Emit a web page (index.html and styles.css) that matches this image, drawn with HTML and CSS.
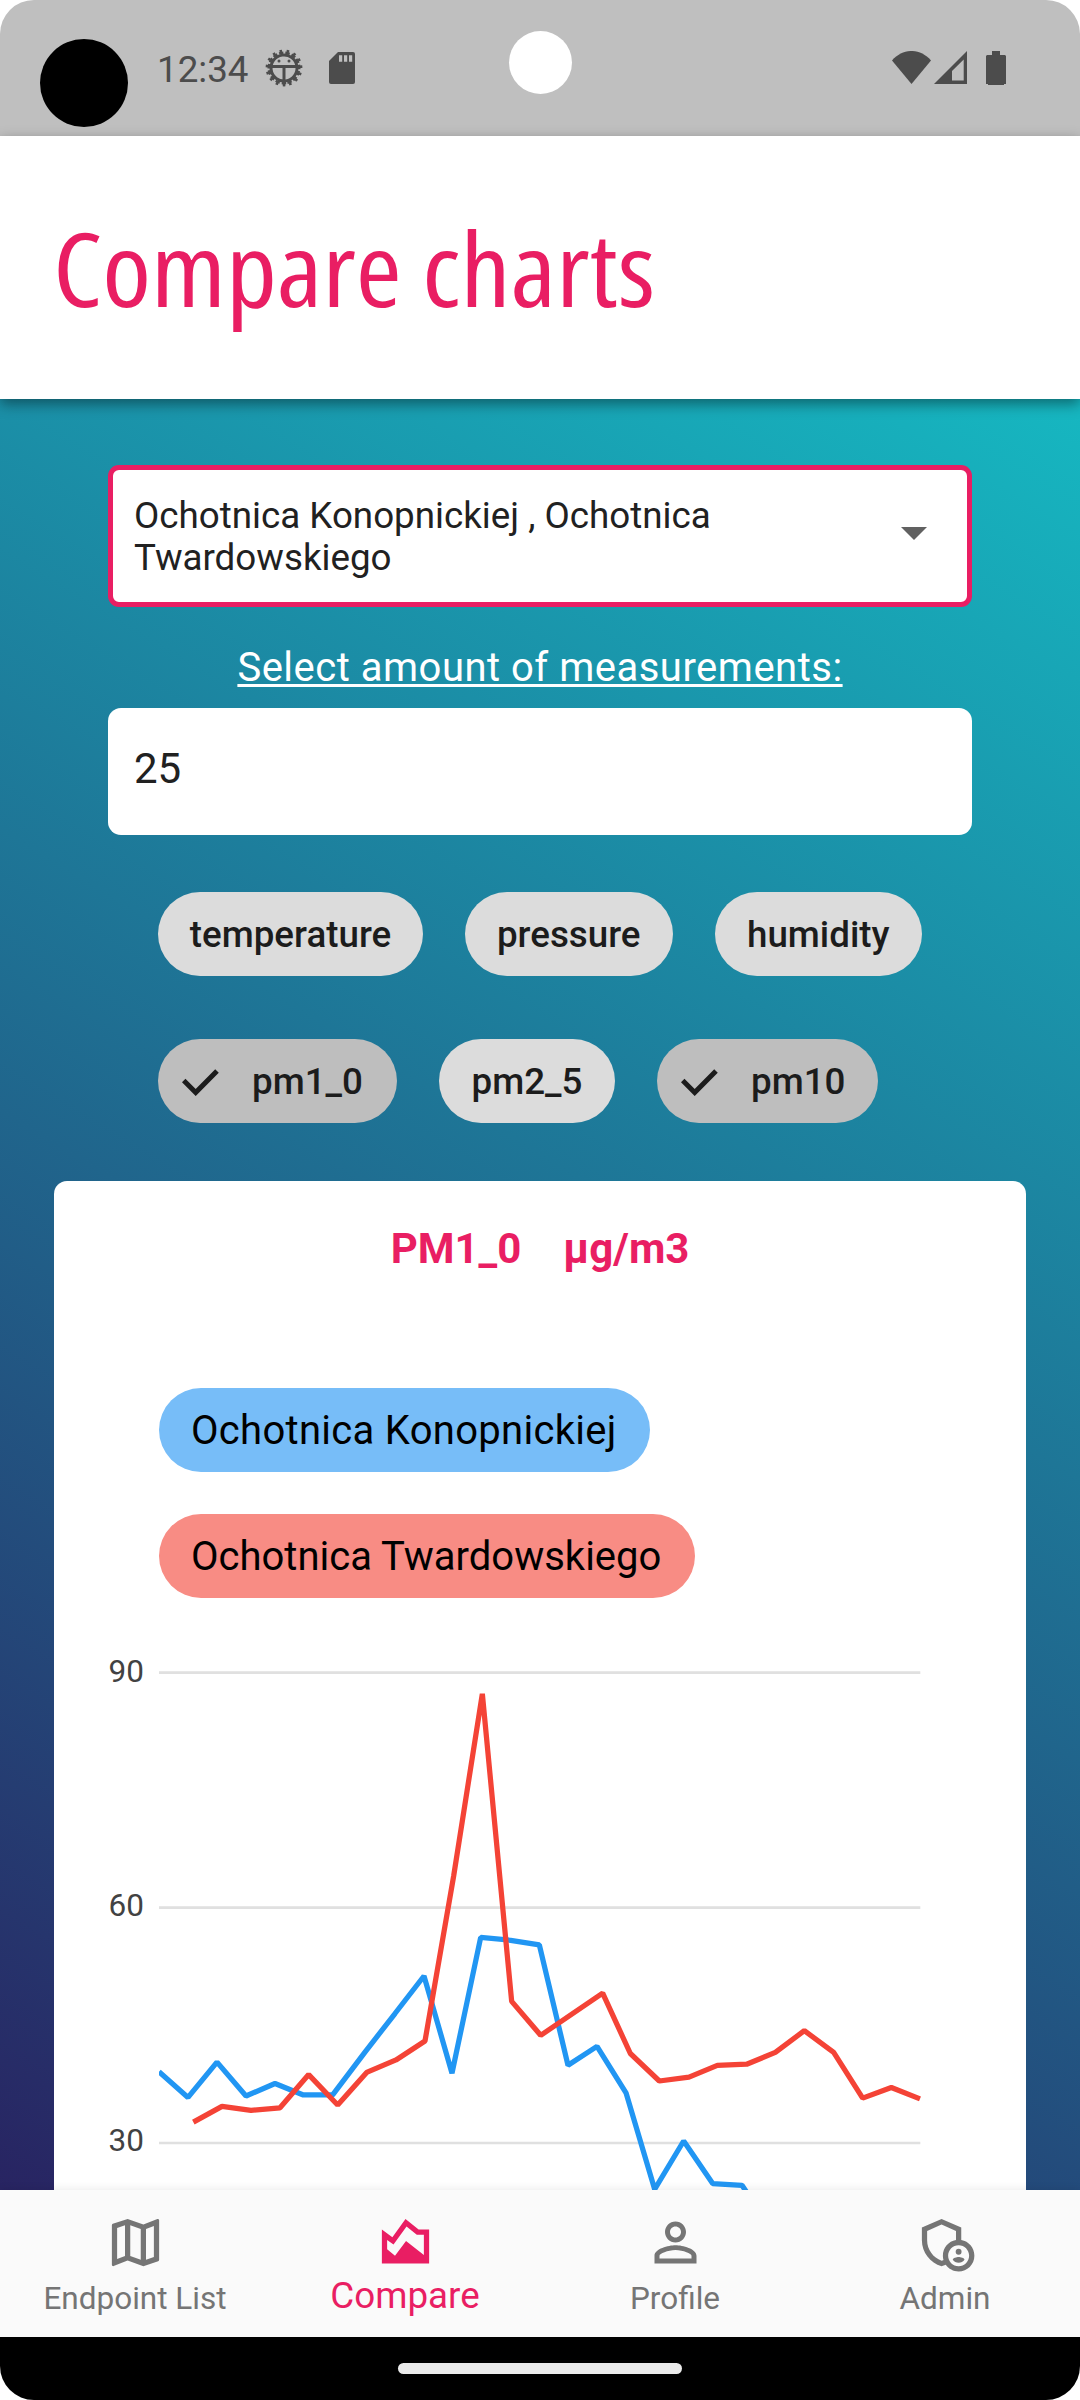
FILE: index.html
```html
<!DOCTYPE html>
<html lang="en">
<head>
<meta charset="utf-8">
<title>Compare charts</title>
<link rel="stylesheet" href="styles.css">
</head>
<body>
<div class="phone">
  <div class="status">
    <span class="blob"></span>
    <span class="camera"></span>
    <span class="time">12:34</span>
    <svg class="bug" viewBox="-19 -19 38 38">
      <g fill="none" stroke="#4c4c4c" transform="rotate(82)">
        <circle r="13" stroke-width="3"/>
        <circle r="15.200" stroke-width="2.600" stroke-dasharray="4.400 1.967"/>
        <circle r="17.200" stroke-width="2.400" stroke-dasharray="2.600 4.605" stroke-dashoffset="-1.100"/>
      </g>
      <path d="M-13-1.600H13M0-1V14" stroke="#4c4c4c" stroke-width="3"/>
      <circle cx="-5" cy="-7" r="1.500" fill="#4c4c4c"/><circle cx="5" cy="-7" r="1.500" fill="#4c4c4c"/>
    </svg>
    <svg class="sd" viewBox="0 0 26 32">
      <path fill="#4c4c4c" d="M9 0H24a2 2 0 0 1 2 2V30a2 2 0 0 1-2 2H2a2 2 0 0 1-2-2V9z"/>
      <path fill="#bfbfbf" d="M10 3.200h3.200v6.600H10zM15 3.200h3.200v6.600H15zM20 3.200h3.200v6.600H20z"/>
    </svg>
    <div class="signals">
      <svg width="39" height="33" viewBox="0 0 39 33"><path fill="#4c4c4c" d="M0 9.500C11-3.200 28-3.200 39 9.500L19.500 33z"/></svg>
      <svg width="33" height="33" viewBox="0 0 33 33"><path fill="#4c4c4c" fill-rule="evenodd" d="M33 0V33H0zM29.700 8.500L18 20V29.500H29.700z"/></svg>
      <svg class="battery" width="20" height="34" viewBox="0 0 20 34"><path fill="#4c4c4c" d="M6 0h8v4h5l1 1v28h-2v1H2v-1H0V5l1-1h5z"/></svg>
    </div>
  </div>

  <header class="header">
    <svg class="title" width="640" height="220" viewBox="0 0 640 220">
      <text x="13" y="150" textLength="602" lengthAdjust="spacingAndGlyphs">Compare charts</text>
    </svg>
  </header>

  <main class="content">
    <div class="select">
      <span>Ochotnica Konopnickiej , Ochotnica Twardowskiego</span>
      <svg width="26" height="13" viewBox="0 0 26 13"><path fill="#616161" d="M0 0h26L13 13z"/></svg>
    </div>
    <div class="label"><span>Select amount of measurements:</span></div>
    <div class="input">25</div>
    <div class="chips">
      <span class="chip w265">temperature</span>
      <span class="chip w208">pressure</span>
      <span class="chip w208">humidity</span>
    </div>
    <div class="chips second">
      <span class="chip on w239"><svg width="37" height="27" viewBox="0 0 37 27"><path d="M1.700 11.500L13.700 23.500L35 2" fill="none" stroke="#1c1c1c" stroke-width="5"/></svg>pm1_0</span>
      <span class="chip w176">pm2_5</span>
      <span class="chip on w221"><svg width="37" height="27" viewBox="0 0 37 27"><path d="M1.700 11.500L13.700 23.500L35 2" fill="none" stroke="#1c1c1c" stroke-width="5"/></svg>pm10</span>
    </div>

    <section class="card">
      <h2 class="card-title"><span>PM1_0</span><span>µg/m3</span></h2>
      <div class="series">
        <span class="tag blue">Ochotnica Konopnickiej</span>
        <span class="tag red">Ochotnica Twardowskiego</span>
      </div>
      <div class="chart">
        <div class="axis"><span>90</span><span>60</span><span>30</span></div>
        <svg class="plot" viewBox="207 30 2286 1620" preserveAspectRatio="none">
          <path class="grid" d="M207 90.500H2491M207 748.500H2491M207 1407.500H2491"/>
          <polyline class="line-blue" points="207,1208 294,1280 381,1181 468,1276 555,1241 640,1273 728,1273 825,1153 915,1045 1002,940 1086,1212 1172,832 1262,840 1348,853 1434,1190 1521,1137 1608,1267 1694,1537 1781,1402 1868,1521 1956,1526 1995,1580"/>
          <polyline class="line-red" points="310,1349 396,1305 483,1316 570,1309 656,1216 743,1301 830,1210 918,1175 1005,1122 1091,660 1177,150 1265,1011 1352,1106 1538,988 1621,1157 1708,1234 1797,1223 1882,1190 1970,1187 2056,1154 2143,1093 2231,1154 2318,1282 2404,1252 2490,1284"/>
        </svg>
      </div>
    </section>
  </main>

  <nav class="tabs">
    <div class="tab">
      <svg viewBox="0 0 24 24"><path d="M20.500 3l-.16.030L15 5.100 9 3 3.360 4.900c-.21.070-.36.250-.36.480V20.500c0 .28.220.5.500.5l.16-.03L9 18.900l6 2.100 5.640-1.900c.21-.07.360-.25.360-.48V3.500c0-.28-.22-.5-.5-.5zM10 5.470l4 1.400v11.660l-4-1.400V5.470zm-5 .99l3-1.010v11.700l-3 1.160V6.460zm14 11.080l-3 1.010V6.860l3-1.160v11.840z"/></svg>
      <span>Endpoint List</span>
    </div>
    <div class="tab active">
      <svg viewBox="0 0 24 24"><path fill-rule="evenodd" d="M3 7l4 3 5-7 5 4h4v13H3zM5 11v3.600L8 17l4.200-5.600L19 16.800V9h-2.700l-3.900-3.100L7.440 12.800z"/></svg>
      <span>Compare</span>
    </div>
    <div class="tab">
      <svg viewBox="0 0 24 24"><path d="M12 5.900c1.160 0 2.100.94 2.100 2.100s-.94 2.100-2.100 2.100S9.900 9.160 9.900 8s.94-2.100 2.100-2.100m0 9c2.970 0 6.100 1.460 6.100 2.100v1.100H5.900V17c0-.64 3.130-2.100 6.100-2.100M12 4C9.790 4 8 5.790 8 8s1.790 4 4 4 4-1.790 4-4-1.790-4-4-4zm0 9c-2.670 0-8 1.340-8 4v3h16v-3c0-2.660-5.330-4-8-4z"/></svg>
      <span>Profile</span>
    </div>
    <div class="tab">
      <svg viewBox="0 0 24 24"><circle cx="17" cy="15.500" r="1.120"/><path d="M17 17.500c-.73 0-2.190.36-2.240 1.080.5.710 1.320 1.170 2.240 1.170s1.740-.46 2.240-1.170c-.05-.72-1.510-1.080-2.240-1.080z"/><path fill-rule="evenodd" d="M18 11.090V6.270L10.500 3 3 6.270v4.910c0 4.540 3.200 8.790 7.500 9.820.55-.13 1.080-.32 1.600-.55C13.180 21.990 14.970 23 17 23c3.310 0 6-2.690 6-6 0-2.970-2.160-5.430-5-5.910zM11 17c0 .56.080 1.110.23 1.620-.24.110-.48.220-.73.300-3.170-1-5.500-4.240-5.500-7.740v-3.600l5.500-2.400 5.500 2.400v3.510c-2.840.48-5 2.940-5 5.910zm6 4c-2.210 0-4-1.790-4-4s1.790-4 4-4 4 1.790 4 4-1.790 4-4 4z"/></svg>
      <span>Admin</span>
    </div>
  </nav>
  <div class="gesture"><span></span></div>
</div>
</body>
</html>
```
FILE: styles.css
```css
* { box-sizing: border-box; }
body { margin: 0; background: #fff; font-family: Roboto, "Liberation Sans", sans-serif; }
svg { display: block; flex: none; }
.phone {
  width: 1080px; height: 2400px; display: flex; flex-direction: column;
  border-radius: 34px; overflow: hidden; background: #fff;
}

.status {
  position: relative; height: 136px; flex: none; background: #bfbfbf;
  display: flex; align-items: flex-start; padding: 49px 74px 0 157px; color: #4c4c4c;
}
.blob { position: absolute; left: 40px; top: 39px; width: 88px; height: 88px; border-radius: 50%; background: #000; }
.camera { position: absolute; left: 509px; top: 31px; width: 63px; height: 63px; border-radius: 50%; background: #fff; }
.time { width: 108px; font-size: 36.75px; line-height: 42px; }
.bug { width: 38px; height: 38px; }
.sd { width: 26px; height: 32px; margin: 3px 0 0 26px; }
.signals { margin-left: auto; display: flex; gap: 3px; padding-top: 2px; }
.battery { margin-left: 16px; }

.header {
  position: relative; z-index: 1; height: 263px; flex: none; background: #fff;
  padding: 21px 0 0 40px; box-shadow: 0 5px 13px rgba(0, 0, 0, .42);
}
.title text {
  font-family: "Ubuntu Condensed", "Open Sans", sans-serif; font-size: 103px;
  font-stretch: 75%; font-weight: 500; fill: #e91e63;
}

.content {
  height: 1791px; flex: none; overflow: hidden; padding: 65.5px 54px 0;
  display: flex; flex-direction: column;
  background: linear-gradient(211.1deg, #16b7c1, #282462);
}
.select {
  height: 142px; flex: none; margin: 0 54px; padding: 2px 40px 0 21px;
  border: 5px solid #e91e63; border-radius: 11px; background: #fff;
  display: flex; align-items: center; justify-content: space-between;
  font-size: 36.75px; line-height: 42px; color: #212121;
}
.select span { width: 640px; }
.select svg { margin-top: -6px; }
.label {
  margin-top: 36px; height: 65px; flex: none; text-align: center; color: #fff;
  font-size: 40px; line-height: 50px; letter-spacing: .5px;
}
.label span { text-decoration: underline; text-decoration-thickness: 3px; text-underline-offset: 3px; text-decoration-skip-ink: none; }
.input {
  height: 127px; flex: none; margin: 0 54px; padding: 0 26px; border-radius: 13px;
  background: #fff; color: #212121; font-size: 42px; line-height: 121px;
}
.chips { display: flex; gap: 42px; margin: 57px 0 0 104px; flex: none; }
.chips.second { margin-top: 63px; }
.chip {
  height: 84px; border-radius: 42px; background: #dcdcdc; color: #1c1c1c;
  display: flex; align-items: center; justify-content: center;
  font-size: 36.75px; font-weight: 500; line-height: 84px; padding-top: 2px;
}
.chip.on { background: #bebebe; justify-content: flex-start; padding-left: 24px; }
.chip.on svg { margin-right: 33px; }
.w265 { width: 265px; } .w208 { width: 207.5px; } .w239 { width: 239px; }
.w176 { width: 176px; } .w221 { width: 220.5px; }
.input + .chips { margin-top: 57.7px; }

.card { margin-top: 58px; height: 1100px; flex: none; background: #fff; border-radius: 13px 13px 0 0; padding-top: 42.5px; }
.card-title {
  margin: 0; display: flex; justify-content: center; gap: 42px;
  font-size: 42px; line-height: 50px; font-weight: 700; color: #e91e63;
}
.series { margin: 114.5px 0 0 105px; display: flex; flex-direction: column; align-items: flex-start; gap: 42px; }
.tag { height: 84px; border-radius: 42px; padding: 1px 0 0 32px; color: #000; font-size: 40px; line-height: 84px; white-space: nowrap; }
.blue { width: 491px; background: #77bdf8; letter-spacing: .3px; }
.red { width: 536px; background: #f88c84; }
.chart { display: flex; margin-top: 52.5px; }
.plot { width: 762px; height: 578.6px; fill: none; stroke-linejoin: bevel; }
.plot > * { vector-effect: non-scaling-stroke; }
.grid { stroke: #e0e0e0; stroke-width: 2.6px; }
.line-blue { stroke: #2196f3; stroke-width: 5.25px; }
.line-red { stroke: #f44336; stroke-width: 5.25px; }
.axis { width: 105px; padding: 1px 15px 0 0; text-align: right; font-size: 31.5px; line-height: 40px; color: #424242; }
.axis span { display: block; height: 234.5px; }

.tabs {
  position: relative; z-index: 1; height: 147px; flex: none; background: #fafafa;
  display: grid; grid-template-columns: repeat(4, 1fr); box-shadow: 0 0 9px rgba(0, 0, 0, .1);
}
.tab { padding-top: 21px; display: flex; flex-direction: column; align-items: center; color: #757575; font-size: 31.5px; line-height: 38px; }
.tab svg { width: 63px; height: 63px; fill: currentColor; margin-bottom: 6px; }
.tab.active { color: #e91e63; font-size: 36.75px; line-height: 32px; }

.gesture { flex: 1; background: #000; display: flex; justify-content: center; padding-top: 26px; }
.gesture span { width: 284px; height: 11px; border-radius: 6px; background: #ebebeb; }
```
